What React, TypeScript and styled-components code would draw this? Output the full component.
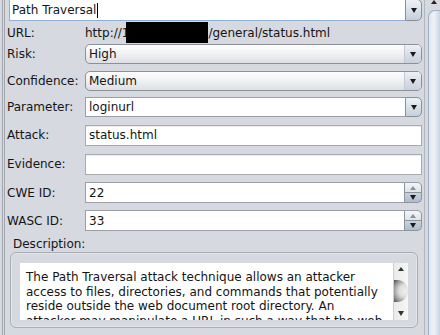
import React from "react";
import styled, { createGlobalStyle } from "styled-components";

const bg = "#d6d9df";
const fieldBorder = "#9b9fa5";
const ink = "#151515";

const GlobalStyle = createGlobalStyle`
  html, body {
    margin: 0;
    padding: 0;
    background: ${bg};
  }
  body {
    font-family: "DejaVu Sans", "Liberation Sans", sans-serif;
    font-size: 12px;
    color: ${ink};
  }
`;

const Window = styled.div`
  width: 440px;
  height: 335px;
  display: flex;
  overflow: hidden;
  background: ${bg};
`;

const Panel = styled.div`
  flex: 1;
  min-width: 0;
  margin-left: 2px;
  border-left: 3px double #a3a7ae;
  display: flex;
  flex-direction: column;
`;

/* outer vertical scrollbar */
const ScrollBar = styled.div`
  width: 16px;
  border-left: 1px solid #b3b7be;
  display: flex;
  flex-direction: column;
  padding-left: 3px;
  box-sizing: border-box;
`;

const ScrollUp = styled.div`
  height: 10px;
  display: flex;
  justify-content: center;
  align-items: flex-start;

  &::before {
    content: "";
    border-left: 3px solid transparent;
    border-right: 3px solid transparent;
    border-bottom: 4px solid #222;
  }
`;

const ScrollThumb = styled.div`
  flex: 1;
  border-left: 1px solid #9fb0c6;
  border-top: 1px solid #9fb0c6;
  border-top-left-radius: 7px;
  background: linear-gradient(90deg, #dde5ef, #eef3f8 45%, #c9d5e3);
`;

const TopCombo = styled.div`
  margin: -1px 2px 0 4px;
  height: 22px;
  display: flex;
`;

const EditField = styled.div<{ $focus?: boolean }>`
  flex: 1;
  box-sizing: border-box;
  background: #fff;
  border: 1px solid ${(p) => (p.$focus ? "#8fb1d6" : fieldBorder)};
  border-right: none;
  padding-left: ${(p) => (p.$focus ? "2px" : "3px")};
  display: flex;
  align-items: center;
  white-space: nowrap;
`;

const Caret = styled.span`
  display: inline-block;
  width: 1px;
  height: 15px;
  background: #000;
  margin-left: 1px;
`;

const Arrow = styled.span<{ $up?: boolean; $tone?: string }>`
  width: 0;
  height: 0;
  border-left: 3px solid transparent;
  border-right: 3px solid transparent;
  ${(p) =>
    p.$up
      ? `border-bottom: 4px solid ${p.$tone || "#1a1a1a"};`
      : `border-top: 5px solid ${p.$tone || "#1a1a1a"};`}
`;

const DropButton = styled.div`
  width: 17px;
  box-sizing: border-box;
  border: 1px solid #8b9098;
  border-radius: 0 5px 5px 0;
  background: linear-gradient(#eef2f6, #d9e1ea 50%, #c3cfdd);
  display: flex;
  align-items: center;
  justify-content: center;
`;

const Form = styled.div`
  display: flex;
  flex-direction: column;
  padding: 0 2px 0 2px;
`;

const Row = styled.div<{ $top: number; $height: number }>`
  display: grid;
  grid-template-columns: 78px 1fr;
  align-items: center;
  margin-top: ${(p) => p.$top}px;
  height: ${(p) => p.$height}px;
`;

const Label = styled.span`
  white-space: nowrap;
`;

const UrlValue = styled.div`
  display: flex;
  align-items: center;
  height: 100%;
  white-space: nowrap;
`;

const Redacted = styled.span`
  display: inline-block;
  width: 82px;
  height: 21px;
  background: #000;
  margin-left: -3px;
`;

const Select = styled.div`
  height: 20px;
  box-sizing: border-box;
  display: flex;
  border: 1px solid #8d9096;
  border-radius: 5px;
  overflow: hidden;
  background: linear-gradient(#fdfdfd, #f1f2f4 45%, #dcdfe4);
`;

const SelectText = styled.span`
  flex: 1;
  padding-left: 3px;
  display: flex;
  align-items: center;
`;

const SelectArrow = styled.span`
  width: 16px;
  display: flex;
  align-items: center;
  justify-content: center;
  border-left: 1px solid #c3c9d2;
  background: linear-gradient(#eef1f5, #d8dee7 50%, #c8d1dd);
`;

const Combo = styled.div`
  height: 20px;
  display: flex;
`;

const TextField = styled.div`
  height: 21px;
  box-sizing: border-box;
  background: #fff;
  border: 1px solid #a7aaaf;
  box-shadow: inset 0 1px 0 #ececec;
  padding-left: 3px;
  display: flex;
  align-items: center;
`;

const Spinner = styled.div`
  height: 21px;
  display: flex;
`;

const SpinButtons = styled.div`
  width: 18px;
  display: flex;
  flex-direction: column;
`;

const SpinButton = styled.div<{ $up?: boolean }>`
  flex: 1;
  box-sizing: border-box;
  border: 1px solid #8e949c;
  border-top: ${(p) => (p.$up ? "1px solid #9aa0a8" : "none")};
  border-radius: ${(p) => (p.$up ? "0 5px 0 0" : "0 0 5px 0")};
  background: ${(p) =>
    p.$up
      ? "linear-gradient(#f3f5f8, #dde3ea)"
      : "linear-gradient(#c9d3df, #aebccd)"};
  display: flex;
  align-items: center;
  justify-content: center;
`;

const DescLabel = styled.div`
  margin: 6px 0 0 8px;
  height: 14px;
  line-height: 14px;
`;

const DescBox = styled.div`
  margin: 1px 0 0 5px;
  width: 408px;
  height: 76px;
  box-sizing: border-box;
  border: 1px solid #a8acb3;
  border-radius: 6px;
  box-shadow: inset 0 0 0 1px #e3e6ea;
  padding: 10px 9px 7px 9px;
  display: flex;
`;

const TextArea = styled.div`
  flex: 1;
  background: #fff;
  overflow: hidden;
  padding: 7px 0 0 6px;
  line-height: 14.5px;
`;

const Line = styled.div`
  white-space: nowrap;
`;

const MiniScroll = styled.div`
  width: 15px;
  box-sizing: border-box;
  border-left: 1px solid #d0d0d0;
  background: linear-gradient(90deg, #eaeaea, #f7f7f7);
  display: flex;
  flex-direction: column;
  align-items: center;
  justify-content: space-between;
  padding: 4px 0 4px;
`;

const MiniThumb = styled.div`
  width: 14px;
  height: 22px;
  align-self: flex-start;
  border-radius: 0 11px 11px 0;
  background: radial-gradient(
    circle at 80% 50%,
    #f0f0f0 0,
    #dcdcdc 40%,
    #a0a0a0 70%,
    #4e4e4e 100%
  );
`;

const description = [
  "The Path Traversal attack technique allows an attacker",
  "access to files, directories, and commands that potentially",
  "reside outside the web document root directory. An",
  "attacker may manipulate a URL in such a way that the web",
];

const App = () => {
  return (
    <Window>
      <GlobalStyle />
      <Panel>
        <TopCombo>
          <EditField $focus>
            Path Traversal
            <Caret />
          </EditField>
          <DropButton>
            <Arrow />
          </DropButton>
        </TopCombo>

        <Form>
          <Row $top={1} $height={21}>
            <Label>URL:</Label>
            <UrlValue>
              http://1
              <Redacted />
              /general/status.html
            </UrlValue>
          </Row>

          <Row $top={1} $height={20}>
            <Label>Risk:</Label>
            <Select>
              <SelectText>High</SelectText>
              <SelectArrow>
                <Arrow />
              </SelectArrow>
            </Select>
          </Row>

          <Row $top={7} $height={20}>
            <Label>Confidence:</Label>
            <Select>
              <SelectText>Medium</SelectText>
              <SelectArrow>
                <Arrow />
              </SelectArrow>
            </Select>
          </Row>

          <Row $top={6} $height={20}>
            <Label>Parameter:</Label>
            <Combo>
              <EditField>loginurl</EditField>
              <DropButton>
                <Arrow />
              </DropButton>
            </Combo>
          </Row>

          <Row $top={7} $height={22}>
            <Label>Attack:</Label>
            <TextField>status.html</TextField>
          </Row>

          <Row $top={7} $height={22}>
            <Label>Evidence:</Label>
            <TextField />
          </Row>

          <Row $top={7} $height={21}>
            <Label>CWE ID:</Label>
            <Spinner>
              <EditField>22</EditField>
              <SpinButtons>
                <SpinButton $up>
                  <Arrow $up $tone="#8a9099" />
                </SpinButton>
                <SpinButton>
                  <Arrow />
                </SpinButton>
              </SpinButtons>
            </Spinner>
          </Row>

          <Row $top={7} $height={21}>
            <Label>WASC ID:</Label>
            <Spinner>
              <EditField>33</EditField>
              <SpinButtons>
                <SpinButton $up>
                  <Arrow $up $tone="#8a9099" />
                </SpinButton>
                <SpinButton>
                  <Arrow />
                </SpinButton>
              </SpinButtons>
            </Spinner>
          </Row>
        </Form>

        <DescLabel>Description:</DescLabel>
        <DescBox>
          <TextArea>
            {description.map((line) => (
              <Line key={line}>{line}</Line>
            ))}
          </TextArea>
          <MiniScroll>
            <Arrow $up $tone="#333" />
            <MiniThumb />
            <Arrow $tone="#333" />
          </MiniScroll>
        </DescBox>
      </Panel>
      <ScrollBar>
        <ScrollUp />
        <ScrollThumb />
      </ScrollBar>
    </Window>
  );
};

export default App;
